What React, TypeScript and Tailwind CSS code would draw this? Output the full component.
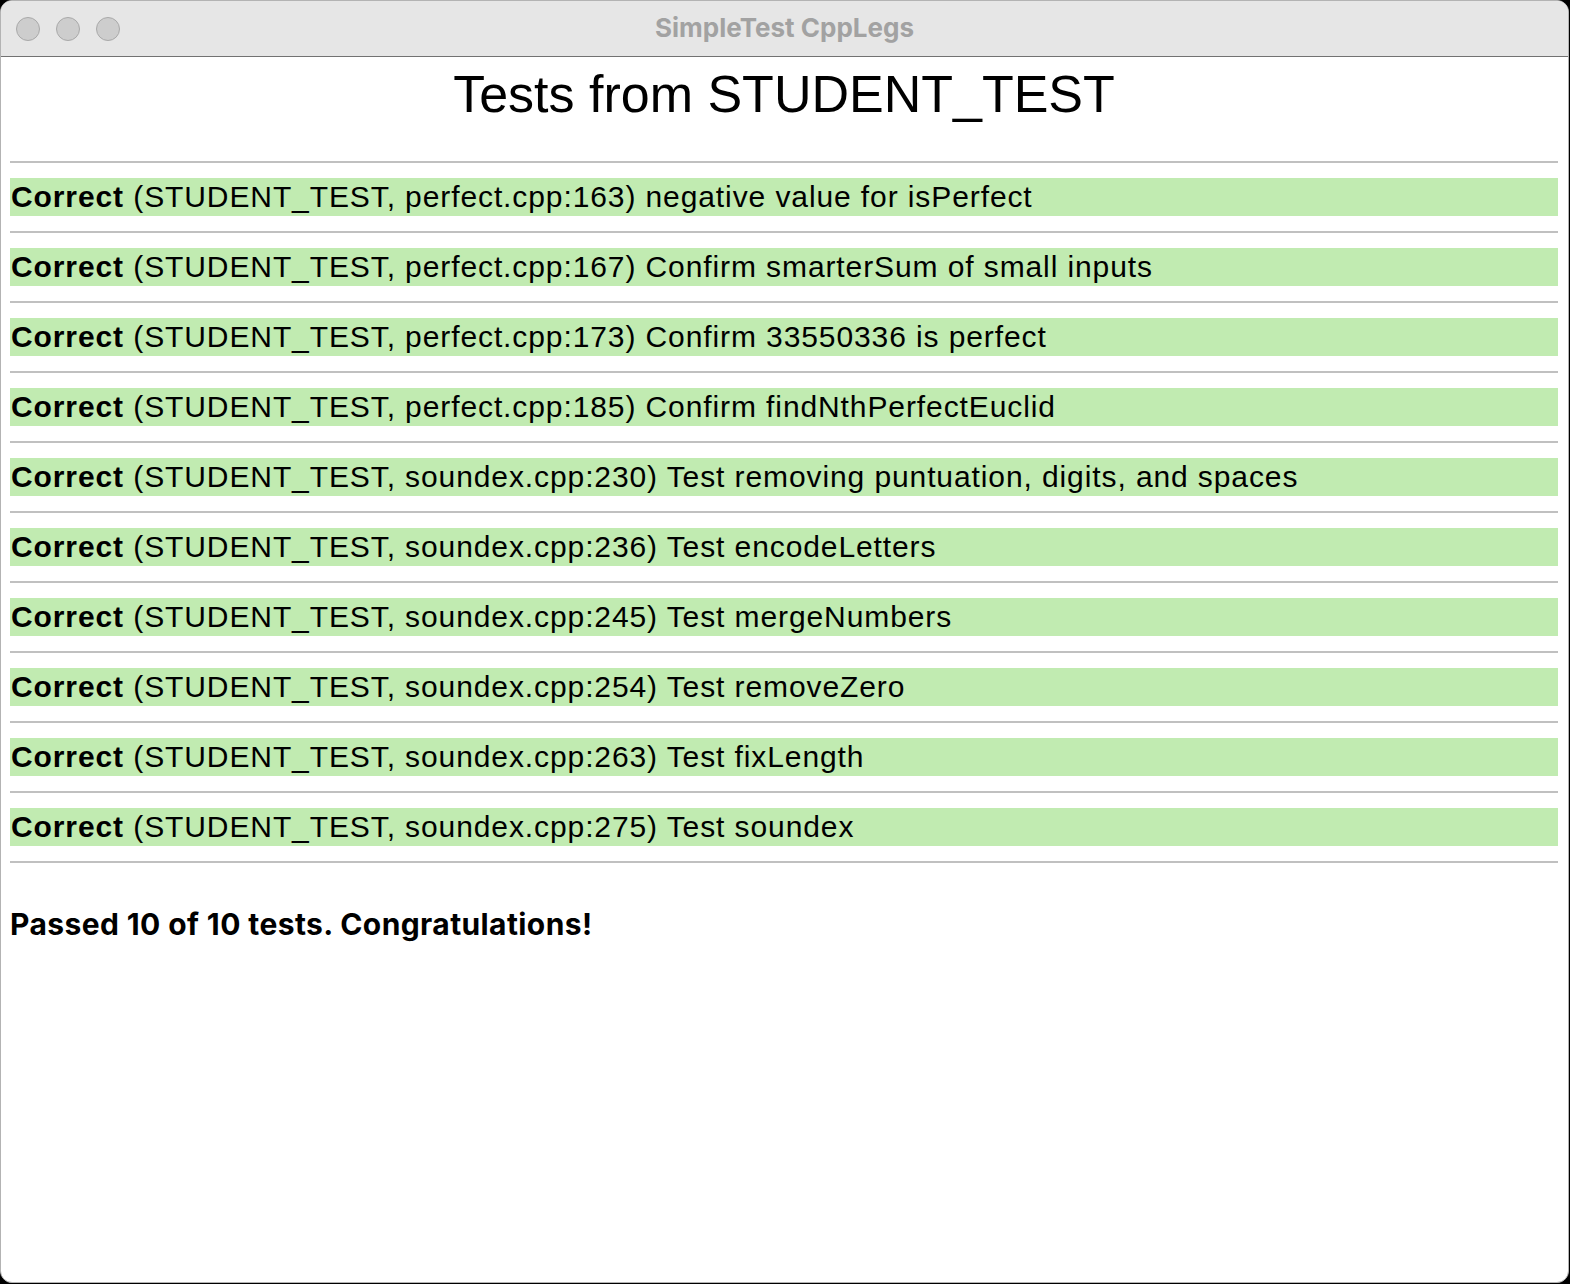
const tests = [
  "(STUDENT_TEST, perfect.cpp:163) negative value for isPerfect",
  "(STUDENT_TEST, perfect.cpp:167) Confirm smarterSum of small inputs",
  "(STUDENT_TEST, perfect.cpp:173) Confirm 33550336 is perfect",
  "(STUDENT_TEST, perfect.cpp:185) Confirm findNthPerfectEuclid",
  "(STUDENT_TEST, soundex.cpp:230) Test removing puntuation, digits, and spaces",
  "(STUDENT_TEST, soundex.cpp:236) Test encodeLetters",
  "(STUDENT_TEST, soundex.cpp:245) Test mergeNumbers",
  "(STUDENT_TEST, soundex.cpp:254) Test removeZero",
  "(STUDENT_TEST, soundex.cpp:263) Test fixLength",
  "(STUDENT_TEST, soundex.cpp:275) Test soundex",
];

function TrafficLight() {
  return <div className="w-[24px] h-[24px] rounded-full bg-[#cdcdcd] border border-[#a9a9a9]" />;
}

export default function App() {
  return (
    <div className="w-[1570px] h-[1284px] bg-black">
      <div className="w-[1569px] h-[1283px] rounded-[12px] border border-[#b3b3b3] bg-white overflow-hidden flex flex-col">
        {/* title bar */}
        <div className="relative h-[56px] shrink-0 bg-[#e6e6e6] border-b border-[#727272] flex items-center">
          <div className="flex gap-[16px] pl-[15px] pt-[1px]">
            <TrafficLight />
            <TrafficLight />
            <TrafficLight />
          </div>
          <div className="absolute inset-0 flex items-center justify-center pb-[2px]">
            <span className="font-['Inter',sans-serif] font-bold text-[26px] text-[#a2a2a2]">
              SimpleTest CppLegs
            </span>
          </div>
        </div>

        {/* content */}
        <div className="pl-[9px] pr-[10px] pt-[11px] font-['Liberation_Sans',Arial,sans-serif] text-black">
          <h1 className="text-center text-[52px] leading-[52px] font-normal">Tests from STUDENT_TEST</h1>
          <div className="mt-[41px]">
            {tests.map((t) => (
              <div key={t}>
                <div className="h-[2px] bg-[#c0c0c0]" />
                <div className="my-[15px] h-[38px] bg-[#c1ebb1] text-[30px] leading-[37px] tracking-[0.9px] whitespace-nowrap pl-[1px]">
                  <span className="font-bold">Correct</span> {t}
                </div>
              </div>
            ))}
            <div className="h-[2px] bg-[#c0c0c0]" />
          </div>
          <p className="mt-[46px] font-['Inter',sans-serif] font-bold text-[30px] leading-[30px] tracking-[0.4px]">
            Passed 10 of 10 tests. Congratulations!
          </p>
        </div>
      </div>
    </div>
  );
}
